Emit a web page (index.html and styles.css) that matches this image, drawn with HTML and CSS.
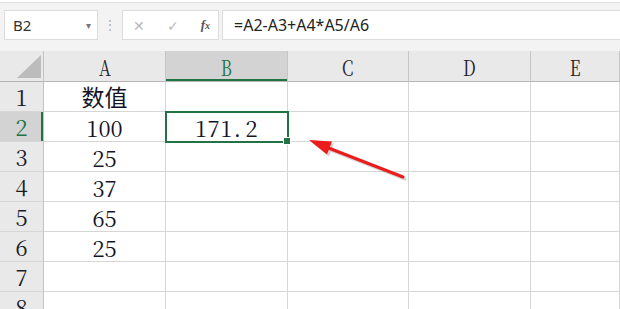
FILE: index.html
```html
<!DOCTYPE html>
<html lang="en">
<head>
  <meta charset="UTF-8">
  <title>Sheet1</title>
  <link rel="stylesheet" href="styles.css">
</head>
<body>
  <div class="app">
    <div class="formula-row">
      <div class="name-box">
        <span>B2</span>
        <span class="caret">&#9662;</span>
      </div>
      <div class="dots">&#8942;</div>
      <div class="fx-box">
        <span class="btn">&#10005;</span>
        <span class="btn">&#10003;</span>
        <span class="fx">f<small>x</small></span>
      </div>
      <div class="formula">=A2-A3+A4*A5/A6</div>
    </div>

    <div class="sheet">
      <div class="corner"><span class="tri"></span></div>
      <div class="col-head"><span>A</span></div>
      <div class="col-head active"><span>B</span></div>
      <div class="col-head"><span>C</span></div>
      <div class="col-head"><span>D</span></div>
      <div class="col-head"><span>E</span></div>

      <div class="row-head">1</div>
      <div class="cell cjk" lang="zh-CN">数值</div>
      <div class="cell"></div><div class="cell"></div><div class="cell"></div><div class="cell"></div>

      <div class="row-head active">2</div>
      <div class="cell">100</div>
      <div class="cell selected">171<span class="dot">.</span>2</div>
      <div class="cell"></div><div class="cell"></div><div class="cell"></div>

      <div class="row-head">3</div>
      <div class="cell">25</div>
      <div class="cell"></div><div class="cell"></div><div class="cell"></div><div class="cell"></div>

      <div class="row-head">4</div>
      <div class="cell">37</div>
      <div class="cell"></div><div class="cell"></div><div class="cell"></div><div class="cell"></div>

      <div class="row-head">5</div>
      <div class="cell">65</div>
      <div class="cell"></div><div class="cell"></div><div class="cell"></div><div class="cell"></div>

      <div class="row-head">6</div>
      <div class="cell">25</div>
      <div class="cell"></div><div class="cell"></div><div class="cell"></div><div class="cell"></div>

      <div class="row-head">7</div>
      <div class="cell"></div><div class="cell"></div><div class="cell"></div><div class="cell"></div><div class="cell"></div>

      <div class="row-head">8</div>
      <div class="cell"></div><div class="cell"></div><div class="cell"></div><div class="cell"></div><div class="cell"></div>
    </div>

    <!-- annotation arrow pointing at B2 -->
    <svg class="arrow" width="620" height="309" viewBox="0 0 620 309">
      <g opacity="0.25" transform="translate(2 2)">
        <line x1="403" y1="177" x2="326" y2="147" stroke="#555" stroke-width="3" stroke-linecap="round"/>
        <polygon points="309,140 332,141.5 327,154.5" fill="#555"/>
      </g>
      <line x1="403" y1="177" x2="326" y2="147" stroke="#ec1c1c" stroke-width="3" stroke-linecap="round"/>
      <polygon points="309,140 332,141.5 327,154.5" fill="#ec1c1c"/>
    </svg>
  </div>
</body>
</html>
```

FILE: styles.css
```css
* {
  margin: 0;
  padding: 0;
  box-sizing: border-box;
}
body {
  width: 620px;
  height: 309px;
  overflow: hidden;
  background: #fff;
  font-family: 'Noto Serif CJK SC', 'Liberation Serif', serif;
  color: #1c1c28;
}
.app {
  position: relative;
  width: 620px;
  height: 309px;
  overflow: hidden;
}

/* formula bar */
.formula-row {
  height: 49px;
  background: #f3f3f3;
  border-top: 1px solid #e0e0e0;
  margin-top: 2px;
  padding: 7px 0 0 4px;
  display: flex;
  align-items: flex-start;
  font-family: 'Noto Sans', 'Liberation Sans', sans-serif;
}
.name-box {
  width: 94px;
  height: 30px;
  background: #fff;
  border: 1px solid #dcdcdc;
  display: flex;
  align-items: center;
  justify-content: space-between;
  padding: 0 6px 0 8px;
  font-size: 15px;
  color: #333;
}
.caret {
  font-size: 10px;
  color: #777;
}
.dots {
  width: 24px;
  text-align: center;
  color: #b5b5b5;
  font-size: 14px;
  line-height: 30px;
}
.fx-box {
  width: 97px;
  height: 30px;
  background: #fff;
  border: 1px solid #dcdcdc;
  display: flex;
  align-items: center;
  justify-content: space-between;
  padding: 0 8px 0 10px;
  margin-right: 3px;
}
.btn {
  color: #b9b9b9;
  font-size: 14px;
}
.fx {
  font-family: 'Liberation Serif', serif;
  font-style: italic;
  font-weight: bold;
  font-size: 13px;
  color: #555;
}
.fx small {
  font-size: 10px;
}
.formula {
  flex: 1;
  height: 30px;
  background: #fff;
  border: 1px solid #dcdcdc;
  border-right: none;
  padding-left: 11px;
  font-size: 16px;
  line-height: 28px;
  color: #222;
}

/* grid */
.sheet {
  display: grid;
  grid-template-columns: 44px 122px 122px 121px 122px 1fr;
  grid-template-rows: 31px repeat(8, 30px);
}
.corner,
.col-head,
.row-head,
.cell {
  border-right: 1px solid #d6d6d6;
  border-bottom: 1px solid #d6d6d6;
}
.corner {
  position: relative;
  background: #e9e9e9;
  border-right-color: #c3c3c3;
  border-bottom-color: #b5b5b5;
}
.tri {
  position: absolute;
  right: 2px;
  bottom: 3px;
  width: 0;
  height: 0;
  border-left: 24px solid transparent;
  border-bottom: 23px solid #bcbcbc;
}
.col-head {
  background: #e9e9e9;
  border-right-color: #c6c6c6;
  border-bottom-color: #b5b5b5;
  text-align: center;
  font-size: 22px;
  line-height: 30px;
  padding-top: 1px;
}
.col-head span {
  display: inline-block;
  transform: scaleX(0.75);
}
.col-head.active {
  background: #d3d3d3;
  color: #217346;
  box-shadow: inset 0 -2px 0 #217346;
}
.row-head {
  background: #e9e9e9;
  border-right-color: #c3c3c3;
  text-align: center;
  font-size: 22px;
  line-height: 29px;
}
.row-head.active {
  background: #d3d3d3;
  color: #217346;
  box-shadow: inset -2px 0 0 #217346;
}
.cell {
  text-align: center;
  font-size: 22px;
  line-height: 29px;
  padding-top: 1px;
  color: #141428;
}
.cell.cjk {
  font-family: 'Noto Sans CJK SC', sans-serif;
  font-size: 23px;
  line-height: 28px;
  padding-top: 0;
}
.cell.selected {
  position: relative;
  letter-spacing: 0.5px;
  outline: 2px solid #217346;
  outline-offset: -1px;
  z-index: 1;
}
.cell.selected .dot {
  margin: 0 4px 0 1px;
}
.cell.selected::after {
  content: '';
  position: absolute;
  right: -4px;
  bottom: -4px;
  width: 6px;
  height: 6px;
  background: #217346;
  border: 1px solid #fff;
}

/* arrow overlay */
.arrow {
  position: absolute;
  left: 0;
  top: 0;
  pointer-events: none;
  z-index: 2;
}
```
